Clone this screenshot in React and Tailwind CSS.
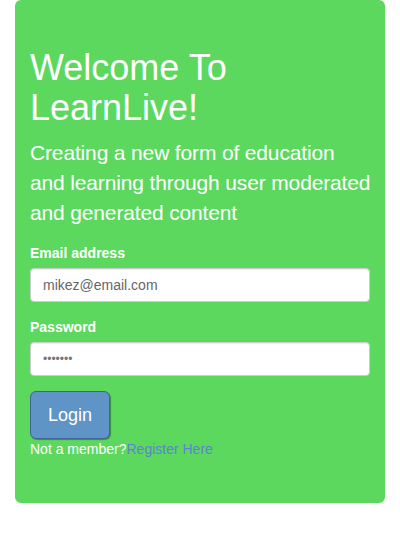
import React from "react";

const App = () => {
  return (
    <div className="min-h-screen bg-white" style={{ fontFamily: "'Liberation Sans', Arial, sans-serif" }}>
      <div className="mx-[15px] h-[503px] rounded-md bg-[#5cd85f] px-[15px] pt-[48px] text-white">
        <h1 className="text-[36px] leading-[1.1] font-normal">Welcome To LearnLive!</h1>
        <p className="mt-[11px] -mr-3 text-[21px] leading-[1.43] tracking-[-0.15px] whitespace-nowrap">
          Creating a new form of education
          <br />
          and learning through user moderated
          <br />
          and generated content
        </p>
        <form className="mt-[15px]" onSubmit={(e) => e.preventDefault()}>
          <label className="block text-[14px] font-bold leading-[20px] mb-[5px]">Email address</label>
          <input
            type="email"
            defaultValue="mikez@email.com"
            className="block h-[34px] w-full rounded border border-[#ccc] bg-white px-3 text-[14px] text-[#666] shadow-[inset_0_1px_1px_rgba(0,0,0,0.075)] outline-none"
          />
          <label className="mt-[15px] block text-[14px] font-bold leading-[20px] mb-[5px]">Password</label>
          <input
            type="password"
            defaultValue="1234567"
            className="block h-[34px] w-full rounded border border-[#ccc] bg-white px-3 text-[12px] text-[#777] shadow-[inset_0_1px_1px_rgba(0,0,0,0.075)] outline-none"
          />
          <button
            type="submit"
            className="mt-[15px] block h-[48px] w-[80px] rounded-md border border-[#40648f] bg-[#5f94c6] text-[18px] text-white shadow-[1px_1px_1px_rgba(0,0,0,0.35)]"
          >
            Login
          </button>
          <p className="text-[14px] leading-[20px]">
            Not a member?<a href="#" className="text-[#5b84d1]">Register Here</a>
          </p>
        </form>
      </div>
    </div>
  );
};

export default App;
